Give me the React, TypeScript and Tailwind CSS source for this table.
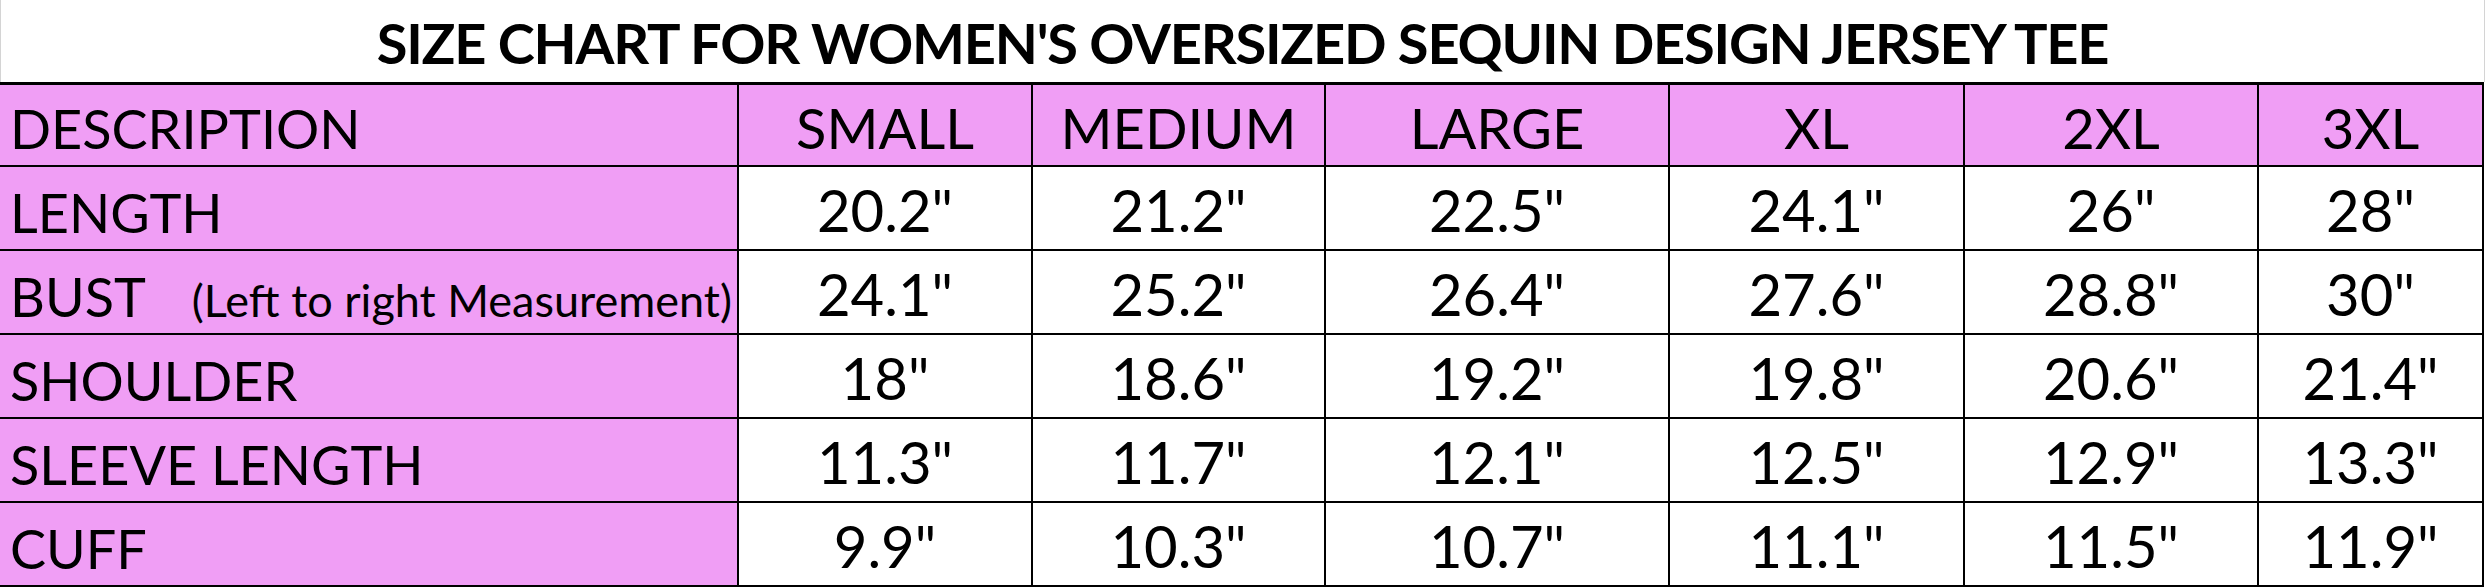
import React from 'react';

const sizes = ['SMALL', 'MEDIUM', 'LARGE', 'XL', '2XL', '3XL'];

const rows: { label: string; note?: string; values: string[] }[] = [
  { label: 'LENGTH', values: ['20.2"', '21.2"', '22.5"', '24.1"', '26"', '28"'] },
  { label: 'BUST', note: '(Left to right Measurement)', values: ['24.1"', '25.2"', '26.4"', '27.6"', '28.8"', '30"'] },
  { label: 'SHOULDER', values: ['18"', '18.6"', '19.2"', '19.8"', '20.6"', '21.4"'] },
  { label: 'SLEEVE LENGTH', values: ['11.3"', '11.7"', '12.1"', '12.5"', '12.9"', '13.3"'] },
  { label: 'CUFF', values: ['9.9"', '10.3"', '10.7"', '11.1"', '11.5"', '11.9"'] },
];

export default function App() {
  return (
    <div className="w-[2488px] h-[588px] bg-white text-black font-['Lato','Liberation_Sans',sans-serif]">
      {/* title */}
      <div className="w-[2485px] h-[82px] border-x border-[#d4d4d4] flex justify-center pt-[15px]">
        <h1 className="text-[56px] leading-none font-bold tracking-[-1.2px]">
          SIZE CHART FOR WOMEN'S OVERSIZED SEQUIN DESIGN JERSEY TEE
        </h1>
      </div>

      {/* chart */}
      <div className="w-[2484px] bg-black pt-[3px] pr-[2px] pb-[2px] grid grid-cols-[737px_292px_291px_342px_293px_292px_223px] grid-rows-[80px_repeat(5,82px)] gap-[2px]">
        <div className="bg-[#f09ef5] flex items-end pl-[10px] pb-[9px] text-[54px] leading-none">DESCRIPTION</div>
        {sizes.map((s) => (
          <div key={s} className="bg-[#f09ef5] flex items-end justify-center pb-[9px] text-[56px] leading-none">
            {s}
          </div>
        ))}

        {rows.map((r) => (
          <React.Fragment key={r.label}>
            <div className="bg-[#f09ef5] flex items-baseline pl-[10px] pt-[19px] text-[54px] leading-none whitespace-nowrap">
              {r.label}
              {r.note && <span className="ml-[46px] text-[45px]">{r.note}</span>}
            </div>
            {r.values.map((v, i) => (
              <div key={i} className="bg-white flex items-end justify-center pb-[10px] text-[58px] leading-none">
                {v}
              </div>
            ))}
          </React.Fragment>
        ))}
      </div>
    </div>
  );
}
